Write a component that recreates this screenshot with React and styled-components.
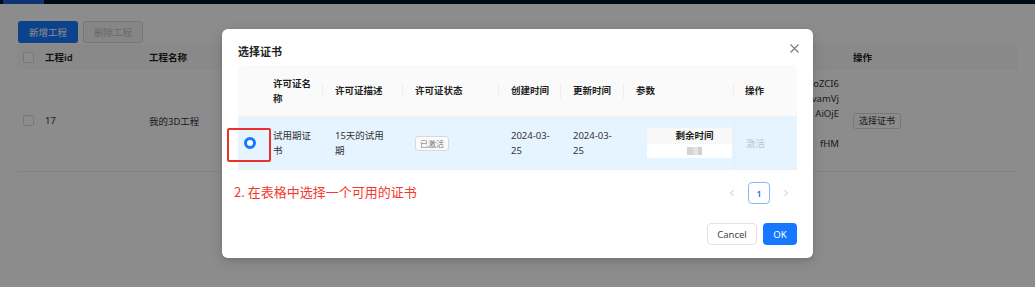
import React from 'react'
import styled, { createGlobalStyle, css } from 'styled-components'

const GlobalStyle = createGlobalStyle`
  html, body { margin:0; padding:0; background:#fff; }
  body {
    font-family: "Noto Sans", "Noto Sans CJK SC", sans-serif;
    color:#1f1f1f;
    overflow:hidden;
  }
  * { box-sizing:border-box; }
`

const cols = '23px 62px 80px 96px 62px 63px 110px 63px'
const bgCols = '22px 104px 617px 87px 171px'

function App() {
  return (
    <Page>
      <GlobalStyle />
      <TopBar><TopTab /></TopBar>
      <Content>
        <Toolbar>
          <PageBtn $primary>新增工程</PageBtn>
          <PageBtn $disabled>删除工程</PageBtn>
        </Toolbar>
        <BgTable>
          <BgHead>
            <BgCell><Check /></BgCell>
            <BgCell>工程id</BgCell>
            <BgCell>工程名称</BgCell>
            <BgCell />
            <BgCell>操作</BgCell>
          </BgHead>
          <BgRow>
            <BgCell><Check /></BgCell>
            <BgCell $normal>17</BgCell>
            <BgCell $normal>我的3D工程</BgCell>
            <TokenCell>
              <span>oZCI6</span>
              <span>vamVj</span>
              <span>AiOjE</span>
              <span>&nbsp;</span>
              <span>fHM</span>
              <span>&nbsp;</span>
            </TokenCell>
            <BgCell><SmallBtn>选择证书</SmallBtn></BgCell>
          </BgRow>
        </BgTable>
      </Content>

      <Mask>
        <Modal>
          <TitleRow>
            <Title>选择证书</Title>
            <Close>
              <svg width="9" height="9" viewBox="0 0 9 9">
                <path d="M0.5 0.5 L8.5 8.5 M8.5 0.5 L0.5 8.5" stroke="#7a7a7a" strokeWidth="1.1" fill="none" />
              </svg>
            </Close>
          </TitleRow>
          <Table>
            <HeadRow>
              <HeadCell />
              <HeadCell $sep $pr={10}>许可证名称</HeadCell>
              <HeadCell $sep $pr={16}>许可证描述</HeadCell>
              <HeadCell $sep>许可证状态</HeadCell>
              <HeadCell $sep $pr={6}>创建时间</HeadCell>
              <HeadCell $sep $pr={6}>更新时间</HeadCell>
              <HeadCell $sep>参数</HeadCell>
              <HeadCell $pl={11}>操作</HeadCell>
            </HeadRow>
            <BodyRow>
              <RadioCell><Radio /></RadioCell>
              <Cell $pr={10}>试用期证书</Cell>
              <Cell $pr={16}>15天的试用期</Cell>
              <Cell><Tag>已激活</Tag></Cell>
              <Cell $pr={6}>2024-03-25</Cell>
              <Cell $pr={6}>2024-03-25</Cell>
              <Cell $pl={23} $pr={2}>
                <ParamBox>
                  <ParamHead>剩余时间</ParamHead>
                  <ParamBody><Mosaic /></ParamBody>
                </ParamBox>
              </Cell>
              <OpCell>激活</OpCell>
            </BodyRow>
          </Table>
          <Pager>
            <PagerItem>
              <svg width="8" height="8" viewBox="0 0 8 8"><path d="M5.5 1 L2.5 4 L5.5 7" stroke="#c2c2c2" strokeWidth="1" fill="none" /></svg>
            </PagerItem>
            <PagerItem $active>1</PagerItem>
            <PagerItem>
              <svg width="8" height="8" viewBox="0 0 8 8"><path d="M2.5 1 L5.5 4 L2.5 7" stroke="#c2c2c2" strokeWidth="1" fill="none" /></svg>
            </PagerItem>
          </Pager>
          <Footer>
            <ModalBtn>Cancel</ModalBtn>
            <ModalBtn $primary>OK</ModalBtn>
          </Footer>
        </Modal>
      </Mask>

      <MarkBox />
      <MarkText>2. 在表格中选择一个可用的证书</MarkText>
    </Page>
  )
}

export default App

const Page = styled.div`
  position:relative;
  width:1035px;
  height:287px;
  overflow:hidden;
  background:#fff;
`
const TopBar = styled.div`
  height:4px;
  background:#001529;
  display:flex;
  padding-left:3px;
`
const TopTab = styled.div`
  width:41px;
  background:#1e5fd0;
`
const Content = styled.div`
  padding:17px 17px 0 17px;
`
const Toolbar = styled.div`
  display:flex;
  gap:5px;
  padding-left:1px;
`
const PageBtn = styled.div`
  height:22px;
  width:60px;
  display:flex;
  align-items:center;
  justify-content:center;
  font-size:9.5px;
  border-radius:3px;
  ${p => p.$primary && css`
    background:#1677ff;
    color:#fff;
  `}
  ${p => p.$disabled && css`
    background:#f5f5f5;
    border:1px solid #d9d9d9;
    color:#bfbfbf;
  `}
`
const BgTable = styled.div`
  margin-top:1px;
`
const BgHead = styled.div`
  display:grid;
  grid-template-columns:${bgCols};
  height:26px;
  background:#fafafa;
  align-items:center;
  font-weight:600;
  font-size:9.5px;
`
const BgRow = styled.div`
  display:grid;
  grid-template-columns:${bgCols};
  height:102px;
  align-items:center;
  border-bottom:1px solid #f0f0f0;
  font-size:9.5px;
`
const BgCell = styled.div`
  padding-left:6px;
  display:flex;
  align-items:center;
  color:${p => (p.$normal ? '#333' : '#1f1f1f')};
`
const Check = styled.span`
  width:11px;
  height:11px;
  border:1px solid #d9d9d9;
  border-radius:2px;
  background:#fff;
`
const TokenCell = styled.div`
  display:flex;
  flex-direction:column;
  align-items:flex-end;
  padding-right:8px;
  line-height:15px;
  color:#333;
`
const SmallBtn = styled.span`
  height:16px;
  padding:0 5px;
  display:flex;
  align-items:center;
  border:1px solid #d9d9d9;
  border-radius:3px;
  font-size:9px;
  color:#333;
  background:#fff;
`
const Mask = styled.div`
  position:absolute;
  inset:0;
  background:rgba(0,0,0,0.45);
  display:flex;
  justify-content:center;
  align-items:flex-start;
  padding-top:29px;
`
const Modal = styled.div`
  width:591px;
  height:229px;
  background:#fff;
  border-radius:6px;
  padding:15px 16px 13px;
  box-shadow:0 4px 14px rgba(0,0,0,0.12), 0 2px 4px rgba(0,0,0,0.08);
  display:flex;
  flex-direction:column;
`
const TitleRow = styled.div`
  display:flex;
  justify-content:space-between;
  align-items:flex-start;
  margin-bottom:5px;
`
const Title = styled.div`
  font-size:11px;
  line-height:16px;
  font-weight:600;
  color:#1f1f1f;
`
const Close = styled.div`
  width:9px;
  height:9px;
  display:flex;
  margin-right:-2px;
`
const Table = styled.div`
  border-radius:6px 6px 0 0;
  overflow:hidden;
`
const HeadRow = styled.div`
  display:grid;
  grid-template-columns:${cols};
  height:52px;
  background:#fafafa;
  border-bottom:1px solid #f0f0f0;
`
const HeadCell = styled.div`
  position:relative;
  display:flex;
  align-items:center;
  padding:0 ${p => p.$pr ?? 8}px 0 ${p => p.$pl ?? 12}px;
  font-size:9.5px;
  line-height:15px;
  font-weight:600;
  color:#1f1f1f;
  ${p => p.$sep && css`
    &::before {
      content:'';
      position:absolute;
      right:0;
      top:50%;
      transform:translateY(-50%);
      width:1px;
      height:15px;
      background:#eeeeee;
    }
  `}
`
const BodyRow = styled.div`
  display:grid;
  grid-template-columns:${cols};
  height:53px;
  background:#e6f4ff;
  border-bottom:1px solid #f0f0f0;
`
const Cell = styled.div`
  display:flex;
  align-items:center;
  padding:0 ${p => p.$pr ?? 8}px 0 ${p => p.$pl ?? 12}px;
  font-size:9.5px;
  line-height:15px;
  color:#333;
`
const RadioCell = styled.div`
  display:flex;
  align-items:center;
  justify-content:center;
`
const Radio = styled.span`
  width:12px;
  height:12px;
  border-radius:50%;
  border:3.5px solid #1677ff;
  background:#fff;
`
const Tag = styled.span`
  height:15px;
  padding:0 4px;
  display:flex;
  align-items:center;
  border:1px solid #d9d9d9;
  border-radius:3px;
  background:#fafafa;
  font-size:8px;
  color:#777;
`
const ParamBox = styled.div`
  width:85px;
  height:30px;
  display:flex;
  flex-direction:column;
  background:#fff;
`
const ParamHead = styled.div`
  height:15px;
  background:#f8f8f8;
  display:flex;
  align-items:center;
  justify-content:center;
  padding-left:10px;
  font-weight:600;
  font-size:9.5px;
  color:#1f1f1f;
`
const ParamBody = styled.div`
  flex:1;
  display:flex;
  align-items:center;
  justify-content:center;
  padding-left:9px;
  border-top:1px dotted #ececec;
`
const Mosaic = styled.span`
  width:15px;
  height:8px;
  background:linear-gradient(90deg, #d4d4d4 0 40%, #e2e2e2 40% 70%, #d0d0d0 70%);
`
const OpCell = styled.div`
  display:flex;
  align-items:center;
  padding-left:11px;
  font-size:9.5px;
  color:#c4c4c4;
  border-left:1px dotted #e2e8ee;
`
const Pager = styled.div`
  margin-top:12px;
  display:flex;
  justify-content:flex-end;
  gap:5px;
`
const PagerItem = styled.div`
  width:22px;
  height:22px;
  display:flex;
  align-items:center;
  justify-content:center;
  border-radius:4px;
  font-size:9.5px;
  ${p => p.$active && css`
    border:1px solid #8db8f7;
    color:#1677ff;
    font-weight:600;
  `}
`
const Footer = styled.div`
  margin-top:19px;
  display:flex;
  justify-content:flex-end;
  gap:6px;
`
const ModalBtn = styled.div`
  height:22px;
  width:${p => (p.$primary ? 34 : 50)}px;
  display:flex;
  align-items:center;
  justify-content:center;
  border-radius:4px;
  font-size:9.5px;
  ${p => (p.$primary
    ? css`background:#1677ff; color:#fff;`
    : css`border:1px solid #e3e3e3; color:#444; background:#fff;`)}
`
const MarkBox = styled.div`
  position:absolute;
  left:227px;
  top:128px;
  width:44px;
  height:34px;
  border:2px solid #e8322a;
  border-radius:2px;
`
const MarkText = styled.div`
  position:absolute;
  left:234px;
  top:183px;
  font-family:"Noto Sans CJK SC", sans-serif;
  font-size:13px;
  line-height:18px;
  color:#f5372c;
`
